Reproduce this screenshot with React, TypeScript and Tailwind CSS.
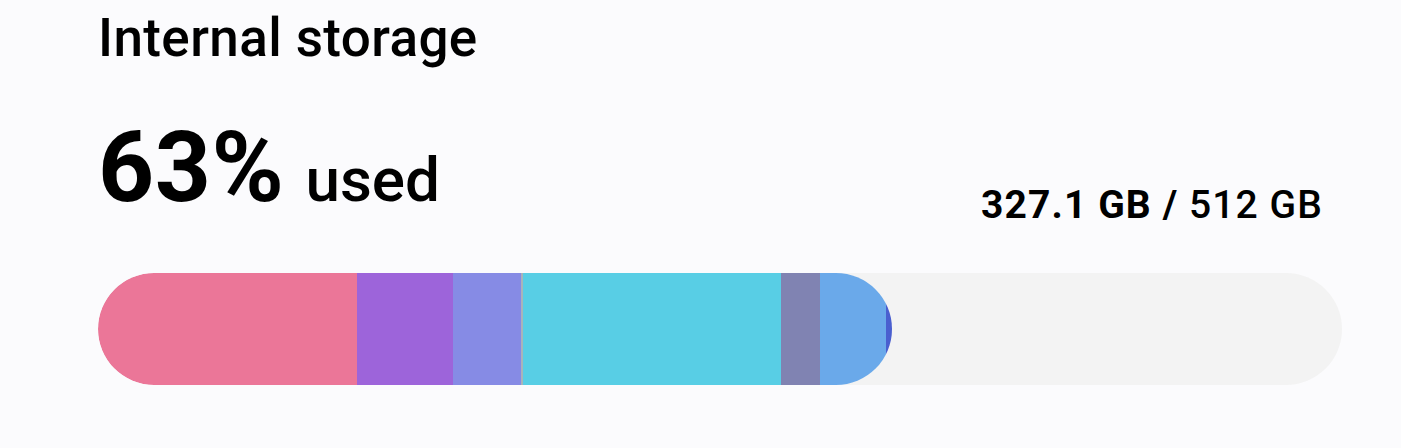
const segments = [
  { label: "Images", size: 259, color: "bg-[#eb7698]" },
  { label: "Videos", size: 96, color: "bg-[#9d64da]" },
  { label: "Audio", size: 68, color: "bg-[#868be5]" },
  { label: "Documents", size: 2, color: "bg-[#a9b3ba]" },
  { label: "Apps", size: 258, color: "bg-[#58cee5]" },
  { label: "Other", size: 39, color: "bg-[#8083b2]" },
  { label: "System", size: 66, color: "bg-[#6aa9ea]" },
  { label: "Trash", size: 6, color: "bg-[#4a5fcf]" },
];

export default function App() {
  return (
    <div className="w-[1401px] h-[448px] bg-[#fbfbfd] text-black font-['Roboto',sans-serif] pl-[98px] pr-[59px] pt-3">
      <h1 className="text-[53px] leading-none font-medium tracking-[0.4px]">Internal storage</h1>

      <div className="mt-[54px] flex items-end justify-between">
        <div className="flex items-baseline gap-[21px] mb-[7px]">
          <span className="text-[98px] leading-none font-bold tracking-[0.5px]">63%</span>
          <span className="text-[62px] leading-none font-medium">used</span>
        </div>
        <div className="mr-[19px] mb-[-1px] text-[39px] leading-none tracking-[1.1px]">
          <span className="font-bold">327.1 GB / </span>
          <span className="font-medium">512 GB</span>
        </div>
      </div>

      <div className="mt-[49px] h-[112px] w-full rounded-full bg-[#f3f3f3] overflow-hidden">
        <div className="flex h-full w-[794px] rounded-full overflow-hidden">
          {segments.map((s) => (
            <div key={s.label} className={`h-full shrink-0 ${s.color}`} style={{ width: s.size }} />
          ))}
        </div>
      </div>
    </div>
  );
}
